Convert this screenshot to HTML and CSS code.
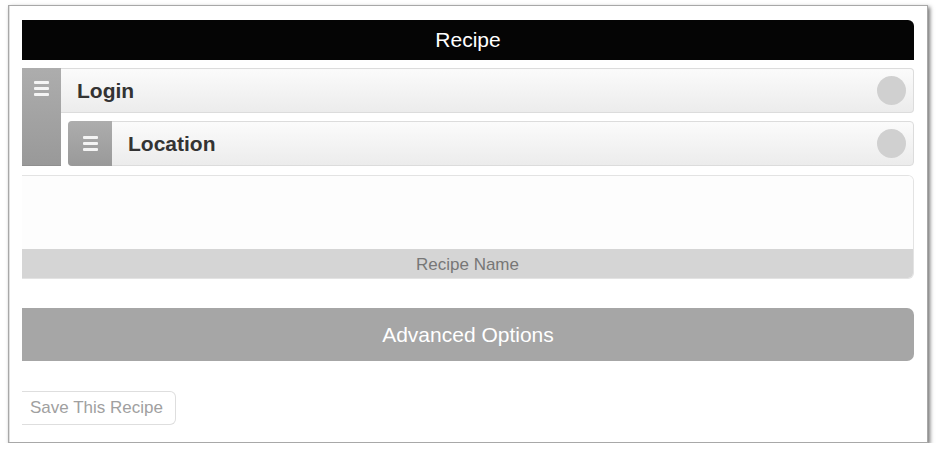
FILE: index.html
```html
<!DOCTYPE html>
<html>
<head>
<meta charset="utf-8">
<link rel="stylesheet" href="styles.css">
</head>
<body>
<div class="frame">
  <div class="header">Recipe</div>

  <div class="group">
    <div class="grip grip-outer">
      <span class="burger"><i></i><i></i><i></i></span>
    </div>
    <div class="stack">
      <div class="row row-login">
        <span class="label">Login</span>
        <span class="dot"></span>
      </div>
      <div class="row row-location">
        <div class="grip grip-inner">
          <span class="burger"><i></i><i></i><i></i></span>
        </div>
        <span class="label label-loc">Location</span>
        <span class="dot"></span>
      </div>
    </div>
  </div>

  <div class="namebox">
    <div class="name-input"></div>
    <div class="name-label">Recipe Name</div>
  </div>

  <div class="advanced">Advanced Options</div>

  <button class="save">Save This Recipe</button>
</div>
</body>
</html>
```

FILE: styles.css
```css
html, body {
  margin: 0;
  padding: 0;
  background: #ffffff;
}

body {
  font-family: "Liberation Sans", Arial, sans-serif;
}

.frame {
  margin: 5px 0 0 8px;
  width: 920px;
  height: 438px;
  box-sizing: border-box;
  border: 1px solid #a8a8a8;
  box-shadow: 2px 2px 4px rgba(0, 0, 0, 0.55), inset 1px 0 0 #e0e0e0;
  padding: 14px 13px 0 13px;
  background: #ffffff;
  display: flex;
  flex-direction: column;
  align-items: stretch;
}

.header {
  height: 40px;
  background: #050505;
  color: #ffffff;
  border-radius: 0 6px 0 0;
  font-size: 21px;
  display: flex;
  align-items: center;
  justify-content: center;
}

.group {
  margin-top: 8px;
  height: 98px;
  display: flex;
}

.grip {
  background: linear-gradient(#adadad, #999999);
  display: flex;
  justify-content: center;
}

.grip-outer {
  width: 39px;
  flex: none;
  padding-top: 13px;
  box-sizing: border-box;
  border-bottom: 1px solid #8f8f8f;
}

.grip-inner {
  width: 44px;
  flex: none;
  align-self: stretch;
  align-items: center;
  border-radius: 4px 0 0 4px;
  margin: -1px 0 -1px -1px;
}

.burger {
  display: flex;
  flex-direction: column;
  gap: 3px;
  width: 15px;
}

.burger i {
  display: block;
  height: 3px;
  background: #f4f4f4;
  border-radius: 1px;
}

.stack {
  flex: 1;
  display: flex;
  flex-direction: column;
  gap: 8px;
}

.row {
  display: flex;
  align-items: center;
  box-sizing: border-box;
  border: 1px solid #dcdcdc;
  background: linear-gradient(#fbfbfb, #ececec);
  border-radius: 0 4px 4px 0;
  color: #333333;
  font-weight: bold;
  font-size: 21px;
}

.row-login {
  height: 45px;
  border-left: none;
  padding-left: 16px;
  padding-right: 7px;
}

.row-location {
  height: 45px;
  margin-left: 7px;
  border-radius: 4px;
  padding-right: 7px;
}

.label {
  flex: 1;
}

.label-loc {
  padding-left: 16px;
}

.dot {
  width: 29px;
  height: 29px;
  border-radius: 50%;
  background: #d0d0d0;
  flex: none;
}

.namebox {
  margin-top: 9px;
  height: 104px;
  box-sizing: border-box;
  border: 1px solid #e3e3e3;
  border-left: none;
  border-radius: 0 6px 6px 0;
  overflow: hidden;
  display: flex;
  flex-direction: column;
}

.name-input {
  flex: 1;
  background: #fdfdfd;
}

.name-label {
  height: 29px;
  background: #d5d5d5;
  color: #777777;
  font-size: 17px;
  display: flex;
  align-items: center;
  justify-content: center;
  padding-top: 2px;
  box-sizing: border-box;
}

.advanced {
  margin-top: 29px;
  height: 53px;
  background: #a6a6a6;
  color: #ffffff;
  border-radius: 0 7px 7px 0;
  font-size: 21px;
  display: flex;
  align-items: center;
  justify-content: center;
}

.save {
  margin-top: 30px;
  align-self: flex-start;
  width: 154px;
  height: 34px;
  box-sizing: border-box;
  border: 1px solid #dedede;
  border-left: none;
  border-radius: 0 6px 6px 0;
  background: #ffffff;
  color: #a0a0a0;
  font-family: "Liberation Sans", Arial, sans-serif;
  font-size: 17px;
  text-align: left;
  padding: 0 0 0 8px;
}
```
